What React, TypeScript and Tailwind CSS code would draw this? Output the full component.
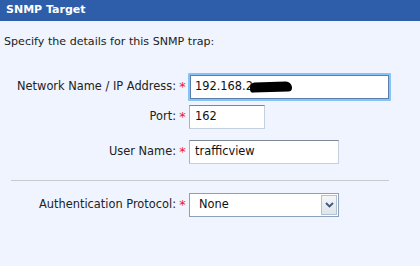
import React from 'react';

const font = { fontFamily: '"DejaVu Sans", Verdana, sans-serif' };

const Star = () => (
    <span className="w-[13px] shrink-0 text-center text-[13px] leading-none text-[#e8212a]">*</span>
);

const Label = ({ children }: { children: React.ReactNode }) => (
    <span className="w-[176px] shrink-0 text-right text-[11.4px] text-[#222]">{children}</span>
);

const App: React.FC = () => {
    return (
        <div className="w-[420px] h-[266px] bg-[#eff4fe] overflow-hidden" style={font}>
            <div className="h-[21px] bg-[#2e5ea9] pl-[6px] flex items-center">
                <span className="text-white font-bold text-[11px]">SNMP Target</span>
            </div>
            <div className="pl-[4px] pt-[13px] text-[11.1px] text-[#222]">
                Specify the details for this SNMP trap:
            </div>

            <div className="flex items-center mt-[22px] h-[28px]">
                <Label>Network Name / IP Address:</Label>
                <Star />
                <div className="ml-[-1px] w-[203px] h-[28px] p-[2px] bg-[#86c4f7] rounded-[1px]">
                    <div className="h-full bg-white border border-[#5d7ea8] pl-[4px] flex items-center text-[11.4px] text-[#111]">
                        192.168.2
                        <span className="inline-block w-[42px] h-[10px] bg-black rounded-[6px_8px_5px_4px] -ml-[3px] -rotate-2"></span>
                    </div>
                </div>
            </div>

            <div className="flex items-center mt-[4px] h-[24px]">
                <Label>Port:</Label>
                <Star />
                <div className="w-[76px] h-[24px] bg-white border border-[#c3d0e0] border-t-[#7c8795] border-l-[#a6b3c3] pl-[5px] flex items-center text-[11.4px] text-[#111]">
                    162
                </div>
            </div>

            <div className="flex items-center mt-[11px] h-[24px]">
                <Label>User Name:</Label>
                <Star />
                <div className="w-[150px] h-[24px] bg-white border border-[#c3d0e0] border-t-[#7c8795] border-l-[#a6b3c3] pl-[5px] flex items-center text-[11.4px] text-[#111]">
                    trafficview
                </div>
            </div>

            <div className="mx-[11px] w-[378px] mt-[16px] h-px bg-[#c8cbce]"></div>

            <div className="flex items-center mt-[12px] h-[24px]">
                <Label>Authentication Protocol:</Label>
                <Star />
                <div className="w-[150px] h-[24px] bg-white border border-[#8aa0bd] flex items-center text-[11.4px] text-[#111]">
                    <span className="flex-1 pl-[9px]">None</span>
                    <span className="w-[16px] h-[20px] mr-[1px] bg-gradient-to-b from-[#f4f6f9] to-[#dfe5ec] border border-[#b4c2d3] flex items-center justify-center">
                        <svg width="9" height="6" viewBox="0 0 9 6">
                            <path d="M1 1 L4.5 4.5 L8 1" stroke="#3f5878" strokeWidth="1.8" fill="none" />
                        </svg>
                    </span>
                </div>
            </div>
        </div>
    );
};

export default App;
